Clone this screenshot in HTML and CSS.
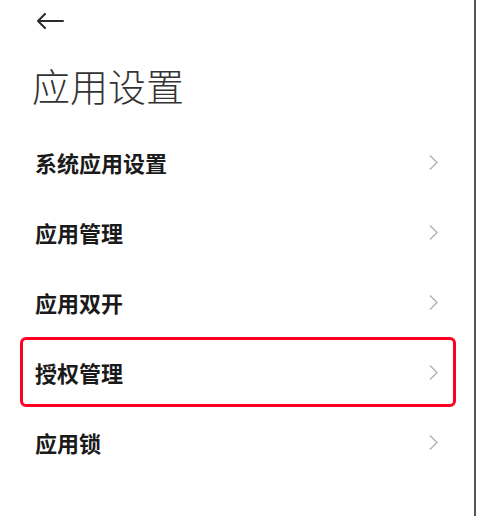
FILE: index.html
```html
<!DOCTYPE html>
<html lang="zh-CN">
<head>
<meta charset="utf-8">
<title>应用设置</title>
<link rel="stylesheet" href="styles.css">
</head>
<body>
<div class="screen">
  <header class="topbar">
    <svg class="back" width="28" height="16" viewBox="0 0 28 16" aria-label="返回">
      <path d="M27 8H2M9 1L2 8L9 15" fill="none" stroke="#2b2b2b" stroke-width="2" stroke-linecap="round" stroke-linejoin="round"/>
    </svg>
  </header>
  <h1 class="title">应用设置</h1>
  <ul class="list">
    <li class="item"><span class="label">系统应用设置</span><svg class="chev" width="9" height="17" viewBox="0 0 9 17"><path d="M1 1.5L8 8.5L1 15.5" fill="none" stroke="#b3b3b3" stroke-width="1.5"/></svg></li>
    <li class="item"><span class="label">应用管理</span><svg class="chev" width="9" height="17" viewBox="0 0 9 17"><path d="M1 1.5L8 8.5L1 15.5" fill="none" stroke="#b3b3b3" stroke-width="1.5"/></svg></li>
    <li class="item"><span class="label">应用双开</span><svg class="chev" width="9" height="17" viewBox="0 0 9 17"><path d="M1 1.5L8 8.5L1 15.5" fill="none" stroke="#b3b3b3" stroke-width="1.5"/></svg></li>
    <li class="item item-selected"><span class="label">授权管理</span><svg class="chev" width="9" height="17" viewBox="0 0 9 17"><path d="M1 1.5L8 8.5L1 15.5" fill="none" stroke="#b3b3b3" stroke-width="1.5"/></svg></li>
    <li class="item"><span class="label">应用锁</span><svg class="chev" width="9" height="17" viewBox="0 0 9 17"><path d="M1 1.5L8 8.5L1 15.5" fill="none" stroke="#b3b3b3" stroke-width="1.5"/></svg></li>
  </ul>
</div>
</body>
</html>
```

FILE: styles.css
```css
html, body {
  margin: 0;
  padding: 0;
  background: #ffffff;
}

body {
  font-family: "Noto Sans CJK SC", "Noto Sans", sans-serif;
  color: #1a1a1a;
}

.screen {
  width: 476px;
  height: 516px;
  box-sizing: border-box;
  border-right: 2px solid #555555;
  overflow: hidden;
}

.topbar {
  height: 42px;
  display: flex;
  align-items: center;
  padding-left: 36px;
}

.back {
  display: block;
}

.title {
  margin: 0;
  height: 85px;
  display: flex;
  align-items: center;
  padding-left: 32px;
  font-size: 38px;
  font-weight: 300;
  color: #333333;
  line-height: 1;
}

.list {
  list-style: none;
  margin: 0;
  padding: 0 18px 0 20px;
}

.item {
  height: 70px;
  box-sizing: border-box;
  border: 3px solid transparent;
  border-radius: 6px;
  display: flex;
  align-items: center;
  justify-content: space-between;
  padding: 0 15px 0 12px;
}

.item-selected {
  border-color: #ff0024;
}

.label {
  font-size: 22px;
  font-weight: 700;
  color: #1a1a1a;
  line-height: 1;
}

.chev {
  display: block;
}
```
